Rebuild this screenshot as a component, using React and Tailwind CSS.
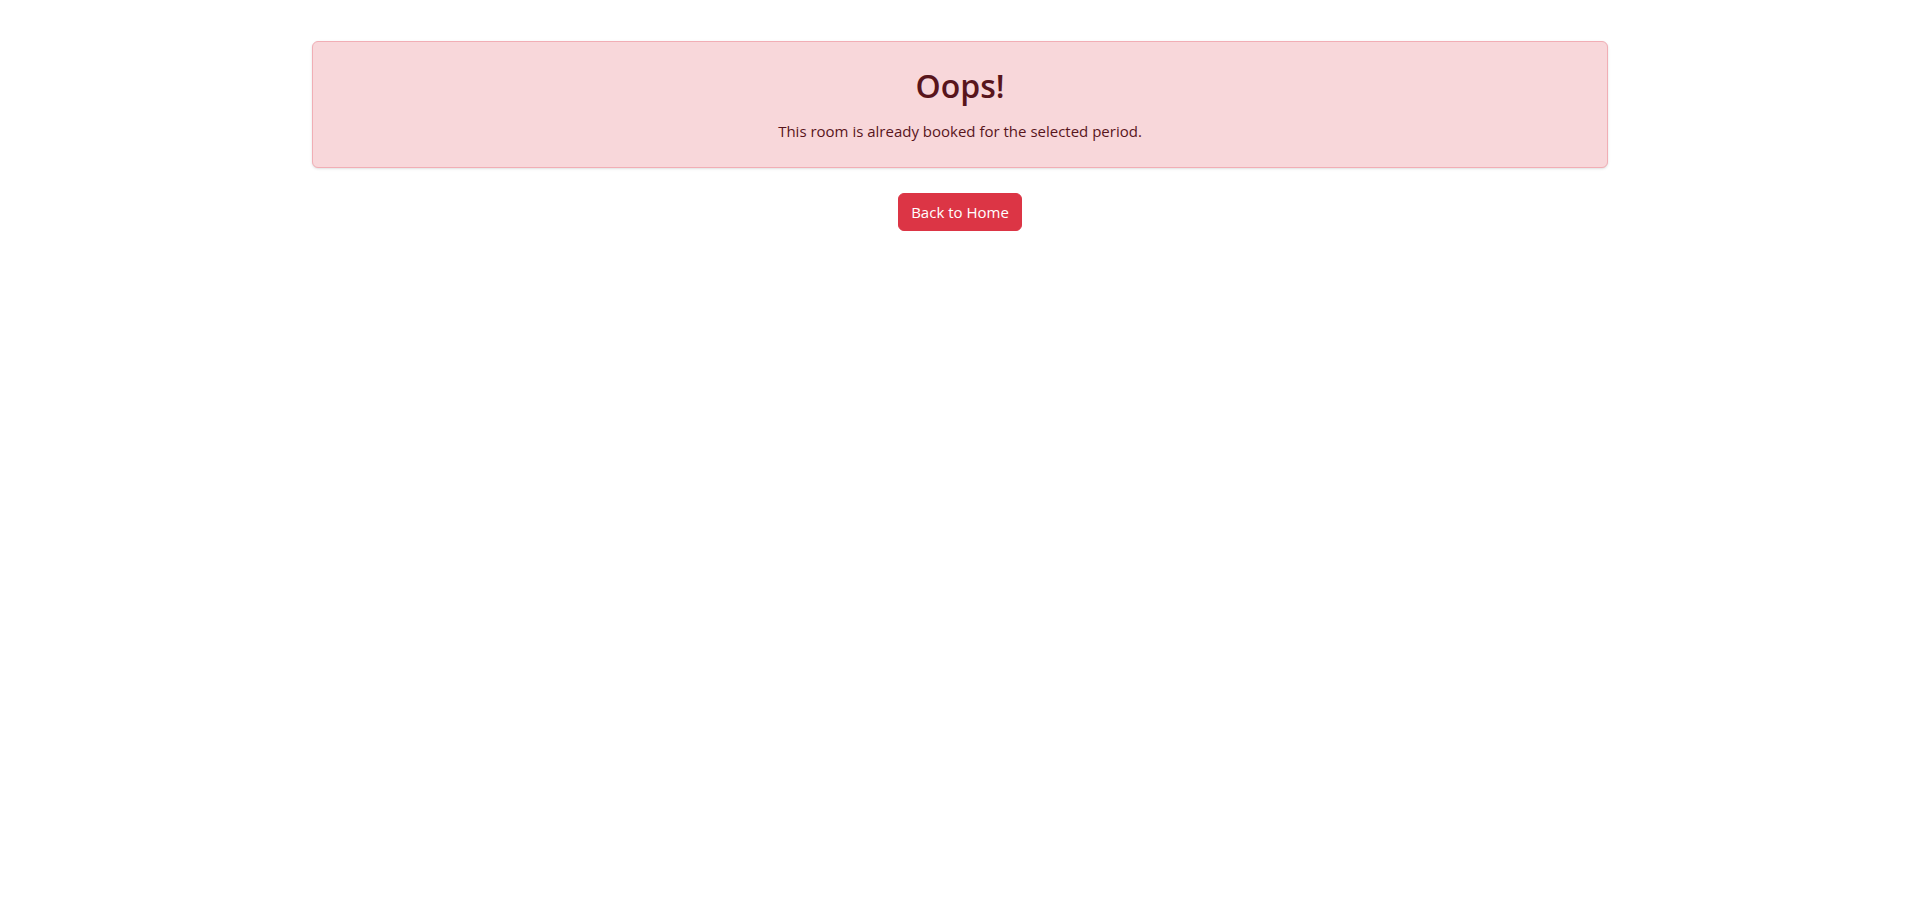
export default function App() {
  return (
    <div className="min-h-screen bg-white font-['Segoe_UI','Open_Sans',sans-serif] text-[#212529]">
      <div className="mx-auto max-w-[1320px] px-3 pt-[41px]">
        {/* Error alert */}
        <div className="rounded-md border border-[#f1aeb5] bg-[#f8d7da] px-6 pt-[26px] pb-6 text-center text-[#58151c] shadow-sm">
          <h2 className="mb-[15px] text-[32px] font-semibold leading-9">Oops!</h2>
          <p className="text-[15px] leading-6">This room is already booked for the selected period.</p>
        </div>

        <div className="mt-[25px] flex justify-center">
          <a
            href="/"
            className="rounded-md border border-[#dc3545] bg-[#dc3545] px-3 py-1.5 text-[15px] leading-6 text-white"
          >
            Back to Home
          </a>
        </div>
      </div>
    </div>
  );
}
